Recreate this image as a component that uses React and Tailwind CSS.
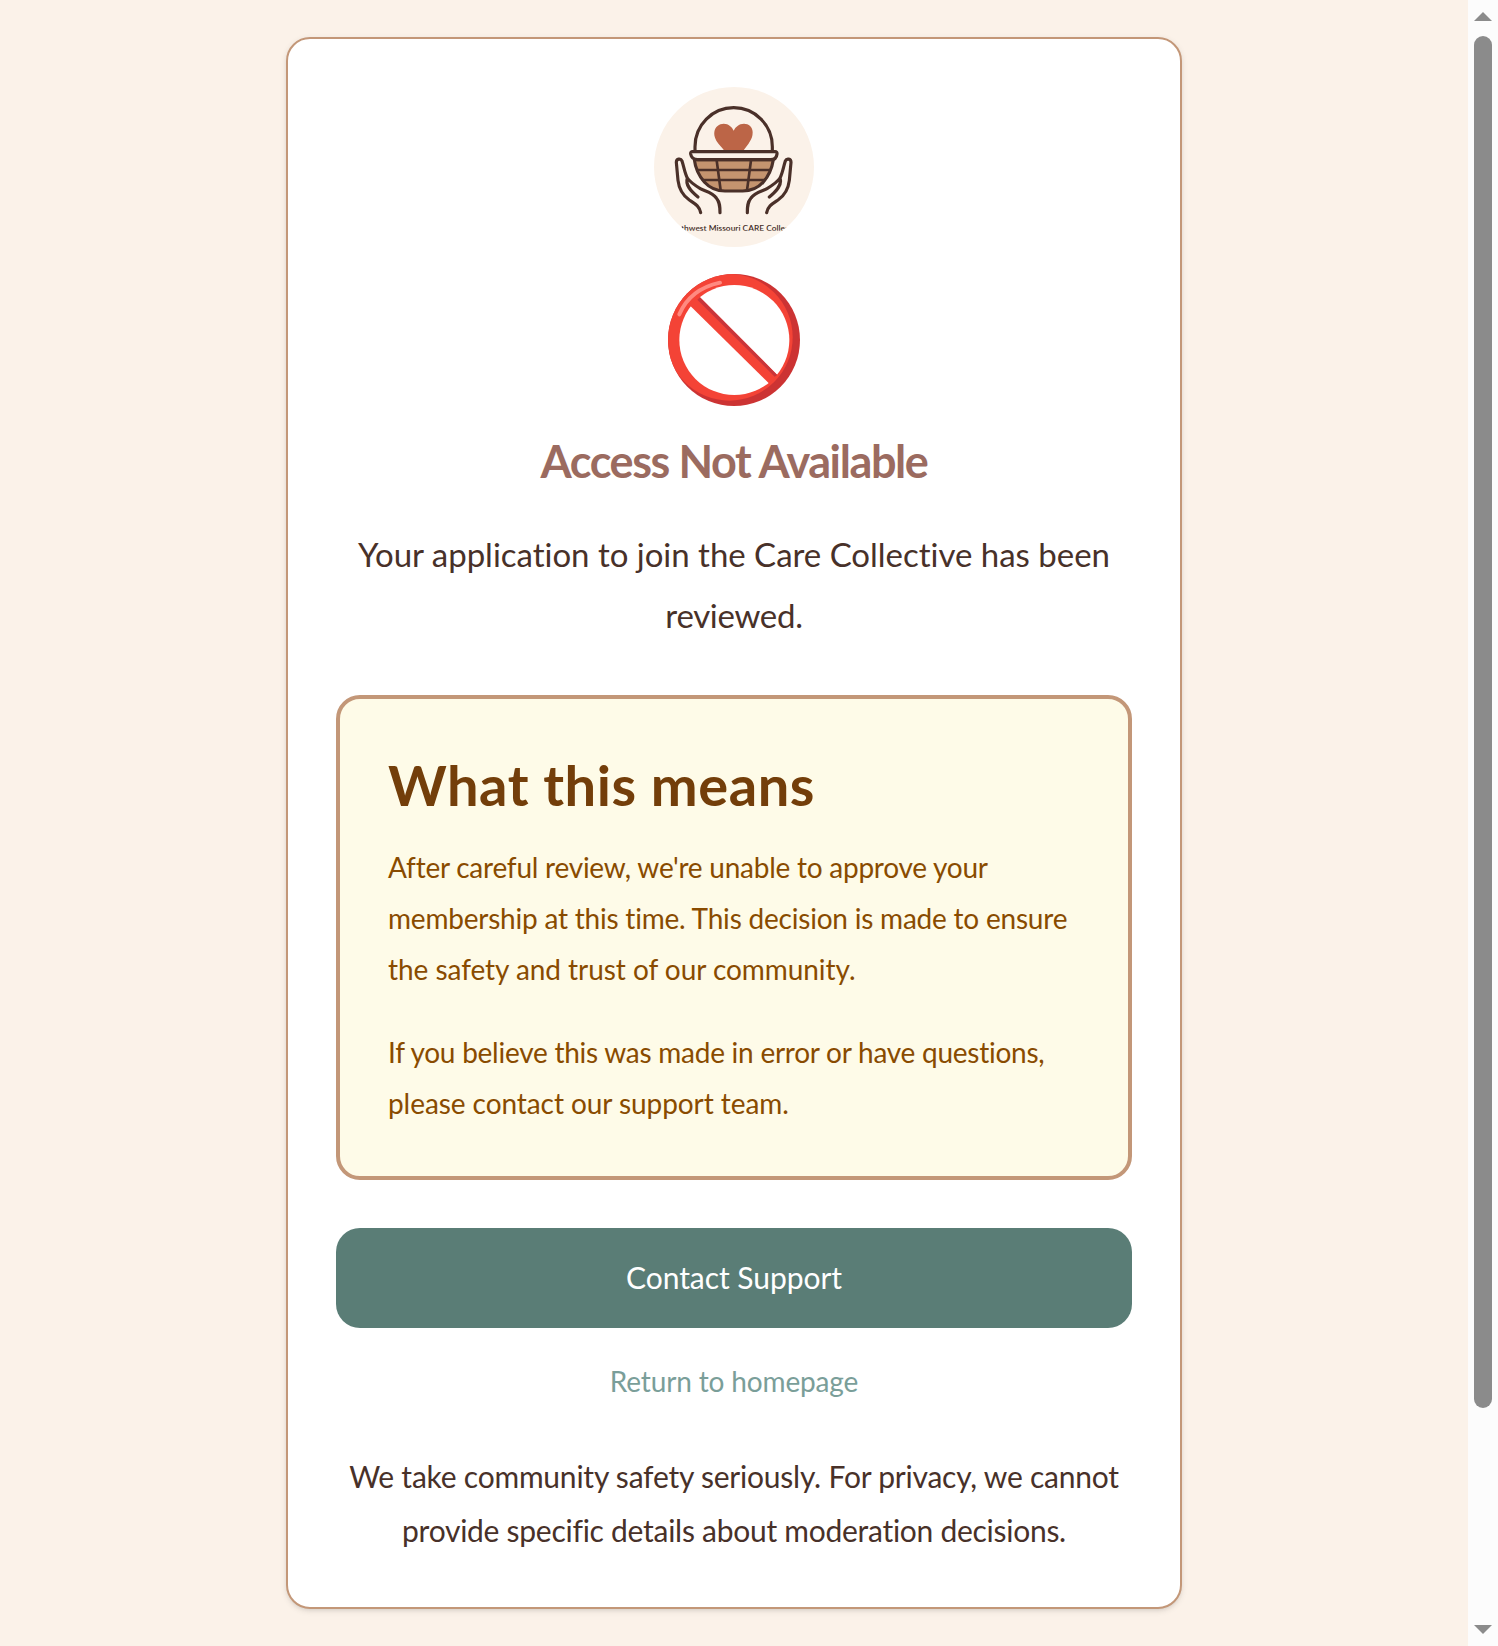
function Logo() {
  return (
    <svg viewBox="42 36 480 480" className="size-40 rounded-full bg-[#fbf2e9]" role="img" aria-label="CARE Collective logo">
      <g fill="none" stroke="#4a3029" strokeWidth="9.5" strokeLinecap="round" strokeLinejoin="round">
        <path d="M252 226 C247 218 236 209 229 197 C223 186 222 178 223 171 C225 155 238 146 251 146 C266 146 276 156 281 167 C286 156 297 146 312 146 C326 146 338 156 338 172 C338 184 335 191 330 199 C325 209 316 218 311 226 Z" fill="#bc6547" stroke="none" />
        <path d="M165 226 V215 A116 117 0 0 1 397 215 V226" />
        <path d="M163 254 C166 278 177 303 193 321 C212 342 232 348 255 348 H308 C334 348 353 340 369 322 C385 304 396 279 400 254 Z" fill="#c4946f" />
        <path d="M158 230 H405 Q412 230 411 237 C410 248 405 254 392 254 H173 C160 254 154 248 152 237 Q151 230 158 230 Z" fill="#fbf2e9" />
        <path d="M171 285 H391 M188 315 H375" strokeWidth="7" />
        <path d="M230 256 L242 346 M333 256 L321 346" strokeWidth="8" />
        <path d="M182 413 C178 393 166 387 148 375 C128 361 117 342 114 316 L109 262 C109 251 122 249 126 258 C132 276 134 294 142 309 C151 323 168 333 183 342 C204 351 219 354 229 369 C240 382 240 396 240 413 M142 309 C135 330 152 348 174 366" />
        <path d="M380 413 C384 393 396 387 414 375 C434 361 445 342 448 316 L453 262 C453 251 440 249 436 258 C430 276 428 294 420 309 C411 323 394 333 379 342 C358 351 343 354 333 369 C322 382 322 396 322 413 M420 309 C427 330 410 348 388 366" />
      </g>
      <clipPath id="wordmark">
        <rect x="120" y="440" width="320" height="27" />
      </clipPath>
      <text x="285" y="467" textAnchor="middle" textLength="408" clipPath="url(#wordmark)" fill="#3f2b25" fontFamily="Lato, sans-serif" fontWeight="600" fontSize="25">
        Southwest Missouri CARE Collective
      </text>
    </svg>
  );
}

function Prohibited() {
  return (
    <svg viewBox="39 27 396 396" className="size-33" aria-hidden="true">
      <clipPath id="disc">
        <circle cx="237" cy="225" r="198" />
      </clipPath>
      <circle cx="237" cy="225" r="198" fill="#cc3333" />
      <circle cx="223" cy="217" r="190" fill="#f44336" clipPath="url(#disc)" />
      <circle cx="238" cy="225" r="165" fill="#fff" />
      <path d="M104 121 L131 93 L369 332 L343 356 Z" fill="#f44336" />
      <path d="M135 97 L367 330 L359 335 L127 104 Z" fill="#c9353a" />
      <path d="M73 148 C93 101 135 66 195 53" fill="none" stroke="#ff8a80" strokeWidth="12" strokeLinecap="round" />
    </svg>
  );
}

function Line({ className = "", children }) {
  return <span className={`block whitespace-nowrap ${className}`}>{children}</span>;
}

function Scrollbar() {
  return (
    <div className="flex w-[30px] shrink-0 flex-col items-center bg-[#fcfcfc] pt-3 pb-3">
      <svg viewBox="0 0 18 9" className="h-[9px] w-[18px] fill-[#8b8b8b]"><path d="M0 9 L9 0 L18 9 Z" /></svg>
      <div className="mt-[15px] h-[1372px] w-[18px] rounded-full bg-[#8b8b8b]" />
      <svg viewBox="0 0 18 9" className="mt-auto h-[9px] w-[18px] fill-[#8b8b8b]"><path d="M0 0 L9 9 L18 0 Z" /></svg>
    </div>
  );
}

export default function App() {
  return (
    <div className="flex h-[1646px] overflow-hidden bg-[#fbf2e9] font-['Lato',sans-serif] text-[#483129]">
      <main className="flex flex-1 items-start justify-center pt-[37px]">
        <section className="flex h-[1572px] w-[896px] flex-col items-center rounded-3xl border-2 border-[#c39778] bg-white p-12 text-center shadow-[0_2px_6px_rgba(0,0,0,0.1),0_2px_4px_-2px_rgba(0,0,0,0.1)]">
          <Logo />
          <div className="mt-[27px]">
            <Prohibited />
          </div>
          <h1 className="mt-[25px] text-[45px] leading-[60px] font-bold tracking-[-1.4px] text-[#9b6b60]">Access Not Available</h1>
          <p className="mt-[33px] text-[33px] leading-[61px]">
            <Line className="tracking-[-0.02px]">Your application to join the Care Collective has been</Line>
            <Line className="tracking-[-0.3px]">reviewed.</Line>
          </p>

          <div className="mt-[49px] h-[485px] w-full shrink-0 rounded-3xl border-4 border-[#c39778] bg-[#fefbe8] p-12 text-left">
            <h2 className="mt-0.5 text-[56px] leading-[72px] font-bold tracking-[0.55px] text-[#733e0a]">What this means</h2>
            <div className="mt-[21px] flex flex-col gap-8 text-[28px] leading-[51px] text-[#894b00]">
              <p>
                <Line className="tracking-[-0.24px]">After careful review, we're unable to approve your</Line>
                <Line className="tracking-[-0.21px]">membership at this time. This decision is made to ensure</Line>
                <Line className="tracking-[-0.05px]">the safety and trust of our community.</Line>
              </p>
              <p>
                <Line className="tracking-[-0.25px]">If you believe this was made in error or have questions,</Line>
                <Line className="tracking-[-0.07px]">please contact our support team.</Line>
              </p>
            </div>
          </div>

          <button className="mt-12 flex h-[100px] w-full shrink-0 items-center justify-center rounded-3xl bg-[#5a7d76] pb-0.5 text-[30px] leading-[54px] tracking-[-0.05px] text-white">
            Contact Support
          </button>
          <a className="mt-[29px] text-[28px] leading-[48px] tracking-[-0.15px] text-[#7a9e99]">Return to homepage</a>
          <p className="mt-11 text-[30px] leading-[54px]">
            <Line className="tracking-[-0.22px]">We take community safety seriously. For privacy, we cannot</Line>
            <Line className="tracking-[-0.27px]">provide specific details about moderation decisions.</Line>
          </p>
        </section>
      </main>
      <Scrollbar />
    </div>
  );
}
